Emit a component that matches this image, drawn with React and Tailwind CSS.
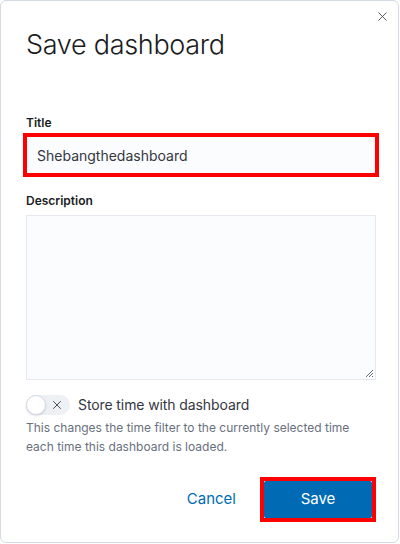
import { X } from 'lucide-react';

export default function App() {
  return (
    <div className="w-[400px] h-[544px] bg-white" style={{ fontFamily: 'Inter, "Liberation Sans", sans-serif' }}>
      <div className="relative w-[399px] h-[543px] border border-[#d3dae6] rounded-[6px] bg-white px-[25px] pt-[26px] text-[#343741]">
        <button className="absolute right-[8px] top-[8px] text-[#343741]">
          <X className="w-[15px] h-[15px]" strokeWidth={1.3} />
        </button>

        <h1 className="text-[27px] leading-[36px] font-light text-[#1a1c21] tracking-[-0.3px]">Save dashboard</h1>

        <div className="mt-[52px]">
          <label className="block text-[12px] leading-[16px] font-semibold text-[#1a1c21]">Title</label>
          <div className="mt-[2px] -ml-[3px] w-[356px] border-[4px] border-[#ff0000]">
            <div className="h-[36px] bg-[#fbfcfd] flex items-center px-[10px] text-[14px] text-[#343741]">
              Shebangthedashboard
            </div>
          </div>
        </div>

        <div className="mt-[16px]">
          <label className="block text-[12px] leading-[16px] font-semibold text-[#1a1c21]">Description</label>
          <div className="relative mt-[6px] w-[350px] h-[165px] bg-[#fbfcfd] border border-[#e5e9ef]">
            <svg className="absolute right-[1px] bottom-[1px]" width="10" height="10" viewBox="0 0 10 10">
              <path d="M9 2 L2 9 M9 5 L5 9 M9 8 L8 9" stroke="#69707d" strokeWidth="1" fill="none" />
            </svg>
          </div>
        </div>

        <div className="mt-[14px] flex items-center gap-[8px]">
          <div className="relative w-[44px] h-[20px] rounded-full bg-[#edf0f5]">
            <div className="absolute left-0 top-0 w-[20px] h-[20px] rounded-full bg-white border border-[#d3dae6] shadow-[0_1px_2px_rgba(0,0,0,0.15)]" />
            <X className="absolute left-[24px] top-[3px] w-[14px] h-[14px] text-[#343741]" strokeWidth={1.5} />
          </div>
          <span className="text-[14px] text-[#343741] tracking-[-0.1px]">Store time with dashboard</span>
        </div>
        <p className="mt-[3px] text-[12px] leading-[19px] text-[#69707d]">
          This changes the time filter to the currently selected time each time this dashboard is loaded.
        </p>

        <div className="mt-[21px] flex items-center justify-end gap-[24px]">
          <button className="text-[15px] text-[#006bb4]">Cancel</button>
          <div className="border-[4px] border-[#ff0000] -mr-[3px]">
            <button className="w-[108px] h-[37px] bg-[#006bb4] text-white text-[15px] font-normal rounded-[2px]">Save</button>
          </div>
        </div>
      </div>
    </div>
  );
}
